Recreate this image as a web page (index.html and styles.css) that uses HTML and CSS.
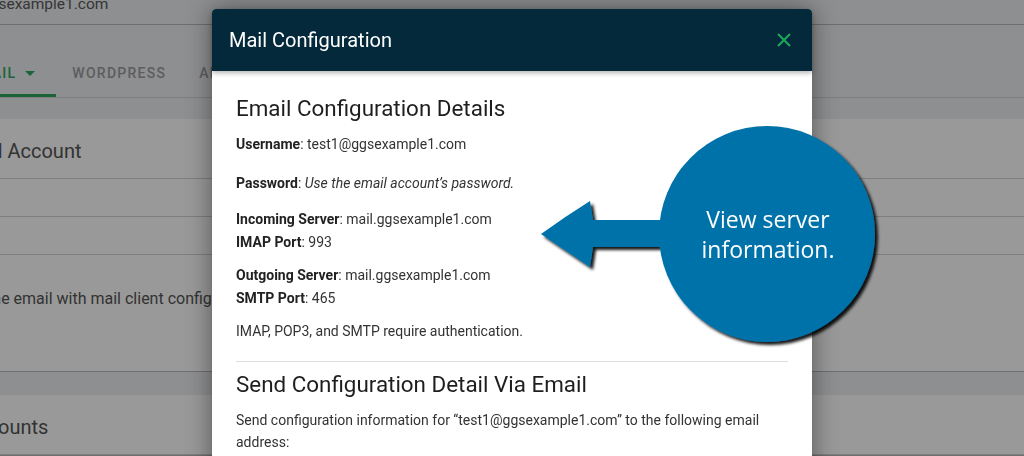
FILE: index.html
```html
<!DOCTYPE html>
<html lang="en">
<head>
    <meta charset="UTF-8">
    <meta name="viewport" content="width=device-width, initial-scale=1.0">
    <title>Mail Configuration</title>
    <link rel="stylesheet" href="styles.css">
</head>
<body>
    <!-- page behind the dialog -->
    <div class="page">
        <div class="domain">ggsexample1.com</div>
        <nav class="tabs">
            <a class="tab active">Email <span class="caret"></span></a>
            <a class="tab">WordPress</a>
            <a class="tab">Advanced</a>
        </nav>

        <section class="panel">
            <h2>Email Account</h2>
            <div class="row"></div>
            <div class="row"></div>
            <p>Use the email with mail client configuration settings.</p>
        </section>

        <section class="panel">
            <h2 class="sub">Accounts</h2>
        </section>
    </div>

    <div class="backdrop"></div>

    <!-- dialog -->
    <div class="modal">
        <div class="modal-header">
            <span class="modal-title">Mail Configuration</span>
            <span class="close">
                <svg width="14" height="14" viewBox="0 0 14 14">
                    <path d="M1 1 L13 13 M13 1 L1 13" stroke="#20a85a" stroke-width="2" fill="none"/>
                </svg>
            </span>
        </div>
        <div class="modal-body">
            <h3>Email Configuration Details</h3>
            <p class="spaced"><strong>Username</strong>: test1@ggsexample1.com</p>
            <p class="spaced"><strong>Password</strong>: <em>Use the email account’s password.</em></p>
            <p><strong>Incoming Server</strong>: mail.ggsexample1.com<br><strong>IMAP Port</strong>: 993</p>
            <p><strong>Outgoing Server</strong>: mail.ggsexample1.com<br><strong>SMTP Port</strong>: 465</p>
            <p>IMAP, POP3, and SMTP require authentication.</p>
            <hr>
            <h3>Send Configuration Detail Via Email</h3>
            <p>Send configuration information for “test1@ggsexample1.com” to the following email address:</p>
        </div>
    </div>

    <!-- annotation -->
    <svg class="callout" width="360" height="250" viewBox="0 0 360 250">
        <defs>
            <filter id="shade" x="-10%" y="-10%" width="130%" height="130%">
                <feDropShadow dx="3" dy="3" stdDeviation="1.6" flood-color="#000" flood-opacity="0.9"/>
            </filter>
        </defs>
        <g filter="url(#shade)" fill="#0072aa">
            <path d="M11 124 Q36 106 60 91 L63 110 L150 110 L150 137 L63 137 L60 157 Q36 141 11 124 Z"/>
            <circle cx="237" cy="124" r="108"/>
        </g>
        <text class="callout-text" x="238" y="118">View server</text>
        <text class="callout-text" x="238" y="148">information.</text>
    </svg>
</body>
</html>
```

FILE: styles.css
```css
body {
    margin: 0;
    height: 456px;
    overflow: hidden;
    font-family: Roboto, "Liberation Sans", sans-serif;
    background-color: #edeef2;
}

/* background page */
.page {
    margin-left: -62px;
}

.domain {
    margin-top: -6px;
    padding: 0 0 10px 43px;
    font-size: 15.5px;
    line-height: 20px;
    color: #5a5a5a;
    border-bottom: 1px solid #b8b8b8;
}

.tabs {
    display: flex;
    padding-left: 15px;
    margin-bottom: 21px;
    border-bottom: 1px solid #d2d2d2;
}

.tab {
    display: flex;
    align-items: center;
    gap: 9px;
    padding: 38px 17px 11px 16px;
    font-size: 14px;
    font-weight: 500;
    line-height: 20px;
    letter-spacing: 1.25px;
    text-transform: uppercase;
    color: #9c9c9c;
    border-bottom: 3px solid transparent;
}

.tab.active {
    padding-right: 21px;
    color: #2fa75c;
    border-bottom-color: #2fa75c;
}

.caret {
    width: 0;
    height: 0;
    border-left: 5px solid transparent;
    border-right: 5px solid transparent;
    border-top: 5px solid #2fa75c;
}

.panel {
    background-color: #fff;
    border-bottom: 1px solid #b9b9b9;
}

.panel + .panel {
    margin-top: 23px;
}

.panel h2 {
    margin: 0;
    padding: 20px 0 15px 15px;
    font-size: 20px;
    font-weight: 400;
    line-height: 24px;
    color: #555;
    border-bottom: 1px solid #d2d2d2;
}

.panel h2.sub {
    padding-left: 26px;
}

.panel .row {
    height: 37px;
    border-bottom: 1px solid #d2d2d2;
}

.panel p {
    margin: 0;
    padding: 34px 0 62px 18px;
    font-size: 16px;
    line-height: 20px;
    color: #555;
}

.backdrop {
    position: fixed;
    top: 0;
    left: 0;
    right: 0;
    bottom: 0;
    background-color: rgba(0, 0, 0, 0.4);
}

/* dialog */
.modal {
    position: absolute;
    top: 9px;
    left: 50%;
    width: 600px;
    height: 480px;
    margin-left: -300px;
    background-color: #fff;
    border-radius: 4px;
    box-shadow: 0 0 26px rgba(0, 0, 0, 0.45);
}

.modal-header {
    position: relative;
    display: flex;
    align-items: center;
    justify-content: space-between;
    height: 62px;
    padding: 0 21px 0 17px;
    background-color: #03293a;
    border-radius: 4px 4px 0 0;
    box-shadow: 0 2px 5px rgba(0, 0, 0, 0.3);
}

.modal-title {
    font-size: 20px;
    color: #fff;
}

.close {
    display: flex;
    cursor: pointer;
}

.modal-body {
    padding: 24px;
    font-size: 14px;
    line-height: 22.5px;
    color: #333;
}

.modal-body h3 {
    margin: 0 0 12px;
    font-size: 22.4px;
    font-weight: 400;
    line-height: 26px;
    color: #1e1e1e;
}

.modal-body p {
    margin: 0 0 11px;
}

.modal-body p.spaced {
    margin-bottom: 16px;
}

.modal-body p.spaced + p.spaced {
    margin-bottom: 14px;
}

.modal-body strong {
    font-weight: 700;
    color: #222;
}

.modal-body hr {
    margin: 18px 0 9px;
    border: none;
    border-top: 1px solid #dcdcdc;
}

/* annotation over the dialog */
.callout {
    position: absolute;
    left: 530px;
    top: 110px;
    overflow: visible;
}

.callout-text {
    font-family: "Open Sans", "Liberation Sans", sans-serif;
    font-size: 23px;
    fill: #fff;
    text-anchor: middle;
}
```
